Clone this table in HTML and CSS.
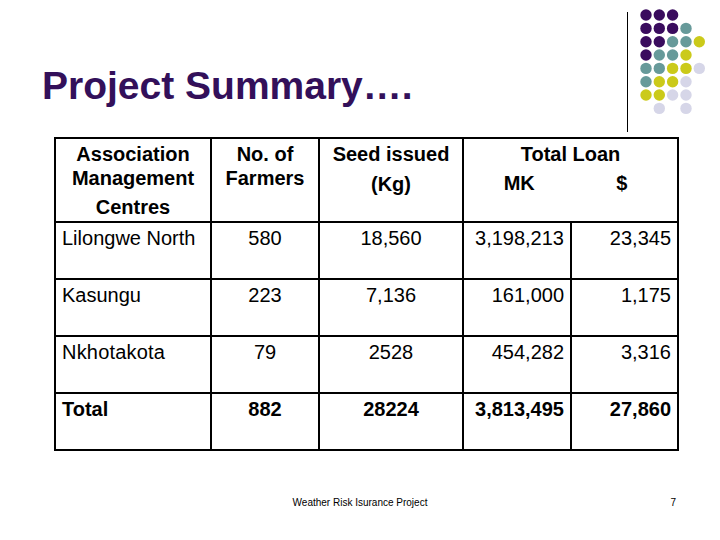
FILE: index.html
```html
<!DOCTYPE html>
<html>
<head>
<meta charset="utf-8">
<link rel="stylesheet" href="styles.css">
</head>
<body>
<div class="slide">
  <div class="header">
    <h1 class="title">Project Summary….</h1>
    <svg class="deco" width="100" height="137" viewBox="0 0 100 137">
      <line x1="7.5" y1="12" x2="7.5" y2="132" stroke="#000" stroke-width="1"/>
      <g>
        <circle cx="26" cy="15" r="5.7" fill="#3a0c5e"/>
        <circle cx="39.3" cy="15" r="5.7" fill="#3a0c5e"/>
        <circle cx="52.6" cy="15" r="5.7" fill="#3a0c5e"/>

        <circle cx="26" cy="28.4" r="5.7" fill="#3a0c5e"/>
        <circle cx="39.3" cy="28.4" r="5.7" fill="#3a0c5e"/>
        <circle cx="52.6" cy="28.4" r="5.7" fill="#3a0c5e"/>
        <circle cx="66" cy="28.4" r="5.7" fill="#679a9a"/>

        <circle cx="26" cy="41.7" r="5.7" fill="#3a0c5e"/>
        <circle cx="39.3" cy="41.7" r="5.7" fill="#3a0c5e"/>
        <circle cx="52.6" cy="41.7" r="5.7" fill="#679a9a"/>
        <circle cx="66" cy="41.7" r="5.7" fill="#679a9a"/>
        <circle cx="79.3" cy="41.7" r="5.7" fill="#cbca1a"/>

        <circle cx="26" cy="55" r="5.7" fill="#3a0c5e"/>
        <circle cx="39.3" cy="55" r="5.7" fill="#679a9a"/>
        <circle cx="52.6" cy="55" r="5.7" fill="#679a9a"/>
        <circle cx="66" cy="55" r="5.7" fill="#cbca1a"/>

        <circle cx="26" cy="68.4" r="5.7" fill="#679a9a"/>
        <circle cx="39.3" cy="68.4" r="5.7" fill="#679a9a"/>
        <circle cx="52.6" cy="68.4" r="5.7" fill="#cbca1a"/>
        <circle cx="66" cy="68.4" r="5.7" fill="#cbca1a"/>
        <circle cx="79.3" cy="68.4" r="5.7" fill="#d6d6e8"/>

        <circle cx="26" cy="81.7" r="5.7" fill="#679a9a"/>
        <circle cx="39.3" cy="81.7" r="5.7" fill="#cbca1a"/>
        <circle cx="52.6" cy="81.7" r="5.7" fill="#cbca1a"/>
        <circle cx="66" cy="81.7" r="5.7" fill="#d6d6e8"/>

        <circle cx="26" cy="95" r="5.7" fill="#cbca1a"/>
        <circle cx="39.3" cy="95" r="5.7" fill="#cbca1a"/>
        <circle cx="52.6" cy="95" r="5.7" fill="#d6d6e8"/>
        <circle cx="66" cy="95" r="5.7" fill="#d6d6e8"/>

        <circle cx="39.3" cy="108.4" r="5.7" fill="#d6d6e8"/>
        <circle cx="66" cy="108.4" r="5.7" fill="#d6d6e8"/>
      </g>
    </svg>
  </div>

  <table class="summary">
    <colgroup>
      <col class="c1"><col class="c2"><col class="c3"><col class="c4"><col class="c5">
    </colgroup>
    <thead>
      <tr class="head-row">
        <th class="hc">
          <div>Association Management</div>
          <div class="gap5">Centres</div>
        </th>
        <th class="hc">
          <div>No. of</div>
          <div>Farmers</div>
        </th>
        <th class="hc">
          <div>Seed issued</div>
          <div class="gap6">(Kg)</div>
        </th>
        <th class="hc" colspan="2">
          <div>Total Loan</div>
          <div class="split gap5"><span>MK</span><span>$</span></div>
        </th>
      </tr>
    </thead>
    <tbody>
      <tr>
        <td class="name">Lilongwe North</td>
        <td class="mid">580</td>
        <td class="mid">18,560</td>
        <td class="num">3,198,213</td>
        <td class="num">23,345</td>
      </tr>
      <tr>
        <td class="name">Kasungu</td>
        <td class="mid">223</td>
        <td class="mid">7,136</td>
        <td class="num">161,000</td>
        <td class="num">1,175</td>
      </tr>
      <tr>
        <td class="name spaced">Nkhotakota</td>
        <td class="mid">79</td>
        <td class="mid">2528</td>
        <td class="num">454,282</td>
        <td class="num">3,316</td>
      </tr>
      <tr class="total">
        <td class="name">Total</td>
        <td class="mid">882</td>
        <td class="mid">28224</td>
        <td class="num">3,813,495</td>
        <td class="num">27,860</td>
      </tr>
    </tbody>
  </table>

  <div class="footer">
    <span class="foot-text">Weather Risk Isurance Project</span>
    <span class="page">7</span>
  </div>
</div>
</body>
</html>
```
FILE: styles.css
```css
html, body {
  margin: 0;
  padding: 0;
  background: #fff;
}

.slide {
  width: 720px;
  height: 540px;
  display: flex;
  flex-direction: column;
  font-family: "Liberation Sans", Arial, sans-serif;
  color: #000;
  overflow: hidden;
}

.header {
  height: 137px;
  display: flex;
  justify-content: space-between;
  align-items: flex-start;
}

.title {
  margin: 0;
  padding: 64px 0 0 42px;
  font-size: 39px;
  line-height: 44px;
  font-weight: bold;
  color: #33105a;
}

.deco {
  display: block;
  flex: none;
}

.summary {
  margin-left: 54px;
  width: 623px;
  border-collapse: collapse;
  table-layout: fixed;
  border: 2px solid #000;
  font-size: 20px;
}

.c1 { width: 156px; }
.c2 { width: 108px; }
.c3 { width: 144px; }
.c4 { width: 108px; }
.c5 { width: 107px; }

.summary th,
.summary td {
  border: 2px solid #000;
  vertical-align: top;
}

.head-row {
  height: 84px;
}

.hc {
  font-weight: bold;
  text-align: center;
  line-height: 24px;
  padding: 3px 4px 0;
}

.gap5 { margin-top: 5px; }
.gap6 { margin-top: 6px; }

.split {
  display: flex;
}
.split span {
  flex: 1;
  text-align: center;
}

.summary tbody tr {
  height: 57px;
}

.summary td {
  line-height: 24px;
  padding: 3px 6px 0;
}

.name { text-align: left; }
.mid { text-align: center; }
.num { text-align: right; }

.spaced { letter-spacing: 0.2px; }

.total td {
  font-weight: bold;
}

.footer {
  margin-top: 46px;
  height: 12px;
  display: flex;
  justify-content: center;
  position: relative;
  font-size: 10px;
  line-height: 12px;
}

.page {
  position: absolute;
  right: 44px;
  top: 0;
}
```
